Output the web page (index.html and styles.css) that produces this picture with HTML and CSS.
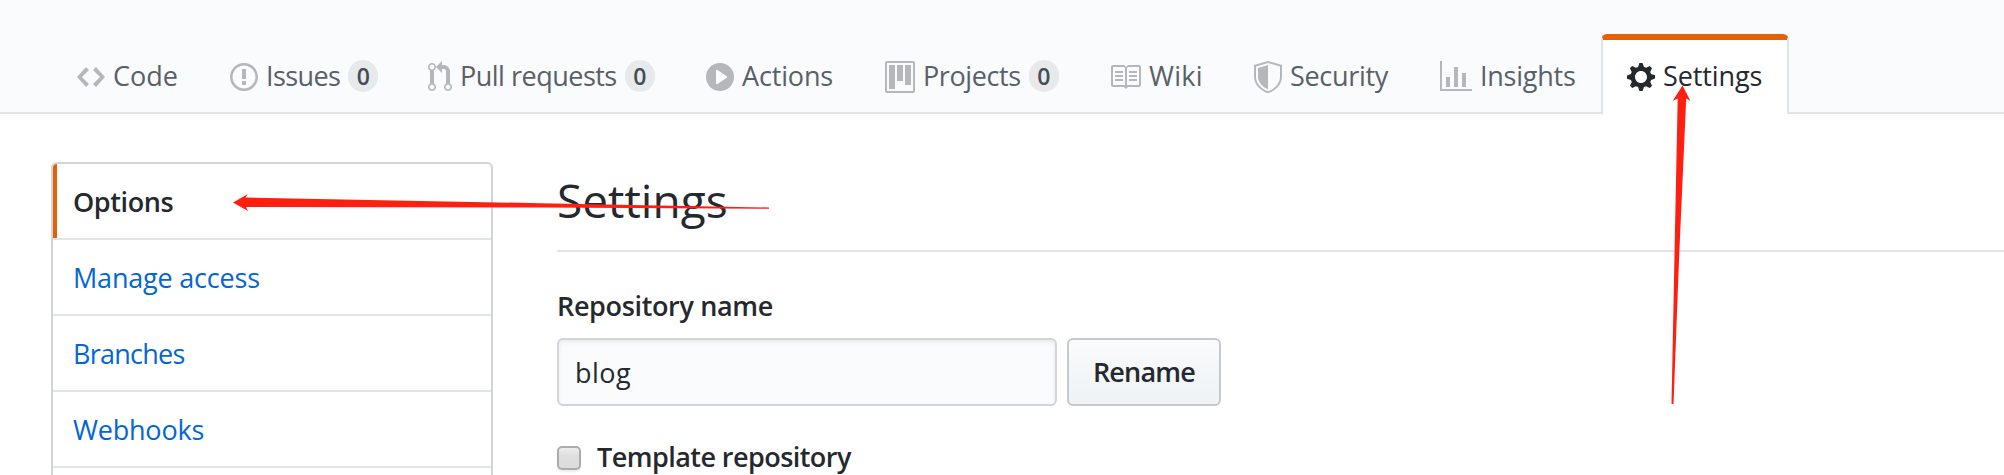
FILE: index.html
```html
<!DOCTYPE html>
<html lang="en">
<head>
<meta charset="utf-8">
<title>Settings</title>
<link rel="stylesheet" href="styles.css">
</head>
<body>
<nav class="tabs">
  <a class="tab tab-code"><svg class="icon" width="28" height="32" viewBox="0 0 14 16"><path d="M9.500 3L8 4.500 11.500 8 8 11.500 9.500 13 14 8 9.500 3zm-5 0L0 8l4.500 5L6 11.500 2.500 8 6 4.500 4.500 3z"/></svg><span class="label">Code</span></a>
  <a class="tab tab-issues"><svg class="icon" width="28" height="32" viewBox="0 0 14 16"><path fill-rule="evenodd" d="M7 2.300c3.140 0 5.700 2.560 5.700 5.700s-2.560 5.700-5.700 5.700A5.710 5.710 0 0 1 1.300 8c0-3.140 2.560-5.700 5.700-5.700zM7 1C3.140 1 0 4.140 0 8s3.140 7 7 7 7-3.140 7-7-3.140-7-7-7zm1 3H6v5h2V4zm0 6H6v2h2v-2z"/></svg><span class="label">Issues</span><span class="counter">0</span></a>
  <a class="tab tab-pulls"><svg class="icon" width="24" height="32" viewBox="0 0 12 16"><path fill-rule="evenodd" d="M11 11.280V5c-.030-.780-.340-1.470-.940-2.060C9.460 2.350 8.780 2.030 8 2H7V0L4 3l3 3V4h1c.270.020.480.110.690.310.210.200.300.420.310.690v6.280A1.993 1.993 0 0 0 10 15a1.993 1.993 0 0 0 1-3.720zm-1 2.920c-.660 0-1.200-.550-1.200-1.200 0-.650.550-1.200 1.200-1.200.650 0 1.200.550 1.200 1.200 0 .650-.550 1.200-1.200 1.200zM4 3c0-1.110-.890-2-2-2a1.993 1.993 0 0 0-1 3.720v6.560A1.993 1.993 0 0 0 2 15a1.993 1.993 0 0 0 1-3.720V4.720c.590-.340 1-.980 1-1.720zm-.800 10c0 .660-.550 1.200-1.200 1.200-.650 0-1.200-.550-1.200-1.200 0-.650.550-1.200 1.200-1.200.650 0 1.200.550 1.200 1.200zM2 4.200C1.340 4.200.800 3.650.800 3c0-.650.550-1.200 1.200-1.200.650 0 1.200.550 1.200 1.200 0 .650-.550 1.200-1.200 1.200z"/></svg><span class="label">Pull requests</span><span class="counter">0</span></a>
  <a class="tab tab-actions"><svg class="icon" width="28" height="32" viewBox="0 0 14 16"><path fill-rule="evenodd" d="M14 8A7 7 0 1 1 0 8a7 7 0 0 1 14 0zm-8.223 3.482l4.599-3.066a.5.5 0 0 0 0-.832L5.777 4.518A.5.5 0 0 0 5 4.934v6.132a.5.5 0 0 0 .777.416z"/></svg><span class="label">Actions</span></a>
  <a class="tab tab-projects"><svg class="icon" width="30" height="32" viewBox="0 0 15 16"><path fill-rule="evenodd" d="M10 12h3V2h-3v10zm-4-2h3V2H6v8zm-4 4h3V2H2v12zm-1 1h13V1H1v14zM14 0H1a1 1 0 0 0-1 1v14a1 1 0 0 0 1 1h13a1 1 0 0 0 1-1V1a1 1 0 0 0-1-1z"/></svg><span class="label">Projects</span><span class="counter">0</span></a>
  <a class="tab tab-wiki"><svg class="icon" width="32" height="32" viewBox="0 0 16 16"><path fill-rule="evenodd" d="M3 5h4v1H3V5zm0 3h4V7H3v1zm0 2h4V9H3v1zm11-5h-4v1h4V5zm0 2h-4v1h4V7zm0 2h-4v1h4V9zm2-6v9c0 .550-.450 1-1 1H9.500l-1 1-1-1H2c-.550 0-1-.450-1-1V3c0-.550.450-1 1-1h5.500l1 1 1-1H15c.550 0 1 .450 1 1zm-8 .500L7.500 3H2v9h6V3.500zm7-.500H9.500l-.500.500V12h6V3z"/></svg><span class="label">Wiki</span></a>
  <a class="tab tab-security"><svg class="icon" width="28" height="32" viewBox="0 0 14 16"><path fill-rule="evenodd" d="M0 2l7-2 7 2v6.020C14 12.690 8.690 16 7 16c-1.690 0-7-3.310-7-7.980V2zm1 .750L7 1l6 1.750v5.268C13 12.104 8.449 15 7 15c-1.449 0-6-2.896-6-6.982V2.750zm1 .750L7 2v12c-1.207 0-5-2.482-5-5.985V3.500z"/></svg><span class="label">Security</span></a>
  <a class="tab tab-insights"><svg class="icon" width="32" height="32" viewBox="0 0 16 16"><path d="M16 14v1H0V0h1v14h15zM5 13H3V8h2v5zm4 0H7V3h2v10zm4 0h-2V6h2v7z"/></svg><span class="label">Insights</span></a>
  <a class="tab tab-settings selected"><svg class="icon" width="28" height="32" viewBox="0 0 14 16"><path fill-rule="evenodd" d="M14 8.770v-1.600l-1.940-.640-.450-1.090.880-1.840-1.130-1.130-1.810.910-1.090-.450-.690-1.920h-1.600l-.630 1.940-1.110.450-1.840-.880-1.130 1.130.910 1.810-.450 1.090L0 7.230v1.590l1.940.640.450 1.090-.880 1.840 1.130 1.130 1.810-.910 1.090.450.690 1.920h1.590l.630-1.940 1.110-.450 1.840.880 1.130-1.130-.920-1.810.470-1.090L14 8.750v.020zM7 11c-1.660 0-3-1.340-3-3s1.340-3 3-3 3 1.340 3 3-1.340 3-3 3z"/></svg><span class="label">Settings</span></a>
</nav>
<div class="page">
  <aside class="menu">
    <a class="menu-item current">Options</a>
    <a class="menu-item item-access">Manage access</a>
    <a class="menu-item item-branches">Branches</a>
    <a class="menu-item item-webhooks">Webhooks</a>
  </aside>
  <main class="content">
    <h2 class="heading">Settings</h2>
    <label class="field-label" for="name">Repository name</label>
    <div class="field-row">
      <input class="name-input" id="name" type="text" value="blog">
      <button class="rename">Rename</button>
    </div>
    <div class="check-row"><span class="checkbox"></span><span class="check-label">Template repository</span></div>
  </main>
</div>
<svg class="arrows" width="2004" height="475" viewBox="0 0 2004 475">
  <path d="M233 202.500L248 194l-2.500 3.600L540 203.200l229 4.300v1.200L540 207.600 246 207l2 4z"/>
  <path d="M1682.500 85.500L1690.500 101l-4.300-2.500L1679 260l-5.500 144h-2L1675 230l2.700-131.500-5 2.500z"/>
</svg>
</body>
</html>
```
FILE: styles.css
```css
* { box-sizing: border-box; }

body {
  margin: 0;
  height: 475px;
  overflow: hidden;
  background: #fff;
  color: #24292e;
  font: 27px/42px "Open Sans", "Noto Sans", sans-serif;
}

/* Repository tabs */
.tabs {
  display: flex;
  align-items: flex-end;
  height: 114px;
  padding-left: 51px;
  background: #fafbfc;
  box-shadow: inset 0 -2px #e1e4e8;
}

.tab {
  display: flex;
  align-items: center;
  flex: none;
  height: 80px;
  padding-left: 24px;
  border: 2px solid transparent;
  border-top: 6px solid transparent;
  border-bottom: 0;
  color: #586069;
  white-space: nowrap;
}

.tab-code { width: 153px; }
.tab-issues { width: 198px; letter-spacing: -.6px; }
.tab-pulls { width: 278px; letter-spacing: -.5px; }
.tab-actions { width: 179px; letter-spacing: -.15px; }
.tab-projects { width: 224px; letter-spacing: -.4px; }
.tab-wiki { width: 145px; letter-spacing: .3px; }
.tab-security { width: 186px; letter-spacing: -.3px; }
.tab-insights { width: 187px; letter-spacing: -.25px; }
.tab-settings { width: 188px; letter-spacing: -.1px; }

.selected {
  background: #fff;
  border-color: #e36209 #e1e4e8 transparent;
  border-radius: 6px 6px 0 0;
  color: #24292e;
}

.icon {
  flex: none;
  fill: #b5b7ba;
}

.selected .icon { fill: #24292e; }

.label { margin: -3px 0 0 8px; }

.counter {
  width: 30px;
  height: 32px;
  margin: -2px 0 0 8px;
  border-radius: 16px;
  background: #e8e9eb;
  color: #444d56;
  font-size: 23px;
  font-weight: 600;
  letter-spacing: 0;
  line-height: 33px;
  text-align: center;
}

/* Page body */
.page {
  display: flex;
  gap: 64px;
  height: 361px;
  padding: 48px 0 0 51px;
}

.menu {
  flex: none;
  width: 442px;
  border: 2px solid #d1d5da;
  border-bottom: 0;
  border-radius: 6px 6px 0 0;
}

.menu-item {
  display: block;
  height: 76px;
  padding: 17px 20px 15px;
  border-bottom: 2px solid #e1e4e8;
  color: #0366d6;
}

.item-access { letter-spacing: -.2px; }
.item-branches { letter-spacing: -.75px; }
.item-webhooks { letter-spacing: -.2px; }

.current {
  border-top-left-radius: 4px;
  background: linear-gradient(#e36209, #e36209) left / 4px 100% no-repeat;
  color: #24292e;
  font-weight: 600;
  letter-spacing: -.4px;
}

.content { flex: 1; }

.heading {
  height: 90px;
  margin: 0 0 32px;
  padding-top: 6px;
  border-bottom: 2px solid #e1e4e8;
  font-size: 46px;
  font-weight: 400;
  line-height: 64px;
}

.field-label {
  display: block;
  height: 54px;
  padding-top: 1px;
  font-weight: 600;
  letter-spacing: -.35px;
}

.field-row {
  display: flex;
  gap: 10px;
}

.name-input {
  width: 500px;
  height: 68px;
  padding: 0 16px;
  border: 2px solid #d1d5da;
  border-radius: 6px;
  background: #fafbfc;
  box-shadow: inset 0 2px 4px rgba(27, 31, 35, .075);
  color: #24292e;
  font: inherit;
  letter-spacing: .5px;
}

.rename {
  width: 154px;
  height: 68px;
  padding: 0;
  border: 2px solid #c6c9cc;
  border-radius: 6px;
  background: linear-gradient(#fafbfc, #eff3f6 90%);
  color: #24292e;
  font: inherit;
  font-weight: 600;
  letter-spacing: -.8px;
}

.check-row {
  display: flex;
  align-items: center;
  gap: 16px;
  height: 24px;
  margin-top: 40px;
}

.checkbox {
  width: 24px;
  height: 24px;
  border: 2px solid #acacac;
  border-radius: 5px;
  background: linear-gradient(#ededed, #dedede 40%, #dcdcdc);
  box-shadow: 0 2px 2px rgba(0, 0, 0, .08);
}

.check-label {
  height: 30px;
  margin-top: -2px;
  font-weight: 600;
  letter-spacing: -.55px;
  line-height: 29px;
}

/* Pointers drawn over the page */
.arrows {
  position: absolute;
  top: 0;
  left: 0;
  fill: #ff1f10;
  pointer-events: none;
}
```
